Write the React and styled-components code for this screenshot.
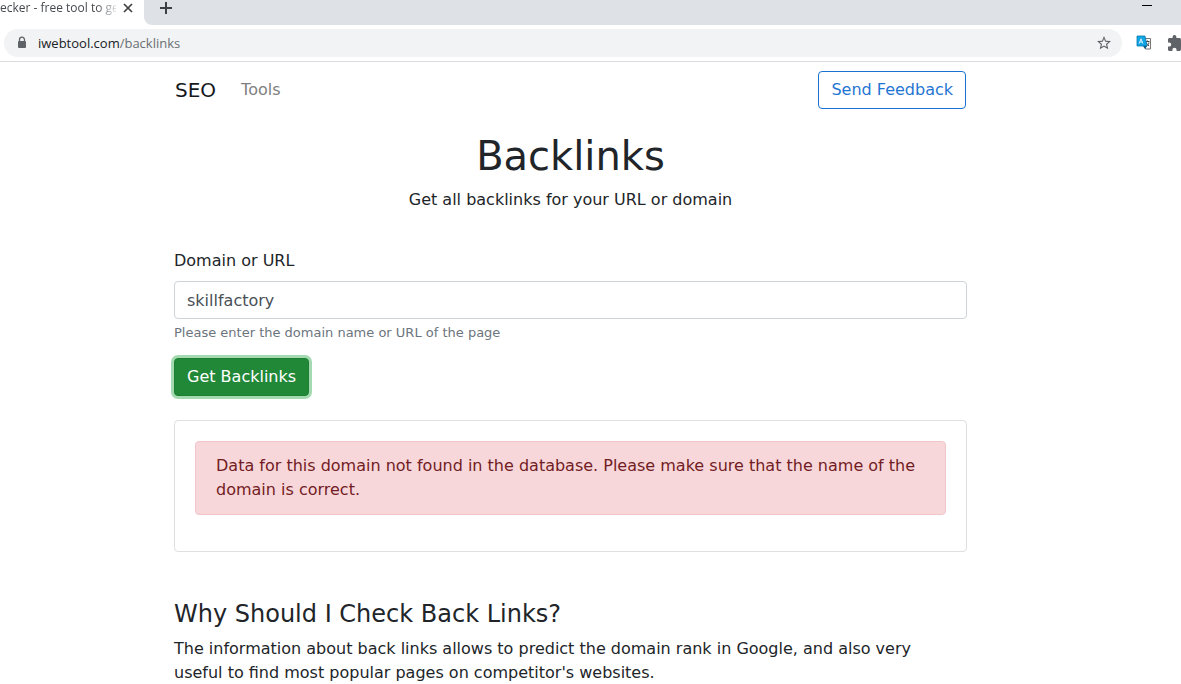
import React from 'react';
import styled, { createGlobalStyle } from 'styled-components';

const GlobalStyle = createGlobalStyle`
  *, *::before, *::after { box-sizing: border-box; }
  html, body { height: 100%; }
  body {
    margin: 0;
    overflow: hidden;
    background: #fff;
    color: #212529;
    font-family: Verdana, "DejaVu Sans", sans-serif;
    font-size: 16px;
    line-height: 24px;
  }
  h1, h2, p { margin: 0; font-weight: 400; }
`;

const Browser = styled.header`
  border-bottom: 1px solid #dadce0;
  font-family: "Segoe UI", "Open Sans", sans-serif;
`;

const TabStrip = styled.div`
  display: flex;
  height: 25px;
  background: #fff;
`;

const Tab = styled.div`
  display: flex;
  flex: none;
  align-items: center;
  gap: 4px;
  width: 144px;
  height: 16px;
  font-size: 12px;
  line-height: 16px;
  color: #45494d;
`;

const TabTitle = styled.span`
  width: 116px;
  overflow: hidden;
  white-space: nowrap;
  mask-image: linear-gradient(to right, #000 96px, transparent 120px);
`;

const TabRest = styled.div`
  display: flex;
  flex: 1;
  justify-content: space-between;
  padding: 0 26px 0 14px;
  background: #dee1e6;
  border-bottom-left-radius: 8px;
`;

const IconButton = styled.button`
  display: flex;
  flex: none;
  align-items: center;
  justify-content: center;
  width: 16px;
  height: 16px;
  padding: 0;
  border: 0;
  background: none;
  color: #3c4043;
`;

const ToolButton = styled(IconButton)`
  color: #5f6368;
`;

const Toolbar = styled.div`
  display: flex;
  align-items: center;
  height: 36px;
  padding-left: 4px;
  overflow: hidden;
`;

const AddressBar = styled.div`
  display: flex;
  flex: 1;
  align-items: center;
  gap: 8px;
  height: 28px;
  padding: 0 10px;
  border-radius: 14px;
  background: #f1f3f4;
  color: #5f6368;
`;

const Address = styled.div`
  flex: 1;
  font-size: 13px;
  line-height: 20px;
  color: #6b6f73;

  span { color: #202124; }
`;

const Extensions = styled.div`
  display: flex;
  flex: none;
  gap: 16px;
  width: 59px;
  padding-left: 14px;
`;

const Page = styled.div`
  padding: 0 214px 0 174px;
`;

const Nav = styled.nav`
  display: flex;
  align-items: center;
  gap: 25px;
  padding: 9px 1px;
`;

const Brand = styled.a`
  font-size: 20px;
  line-height: 30px;
  color: #16191c;
  text-decoration: none;
`;

const NavLink = styled.a`
  flex: 1;
  color: #808080;
  text-decoration: none;
`;

const Button = styled.button`
  height: 38px;
  padding: 0 12px;
  border: 1px solid ${({ $primary }) => ($primary ? '#1e7e34' : '#1a73d2')};
  border-radius: 4px;
  background: ${({ $primary }) => ($primary ? '#218838' : '#fff')};
  box-shadow: ${({ $primary }) => ($primary ? '0 0 0 3px #a3dab0' : 'none')};
  color: ${({ $primary }) => ($primary ? '#fff' : '#1f75d3')};
  font: inherit;
`;

const Intro = styled.div`
  display: flex;
  flex-direction: column;
  gap: 8px;
  padding: 14px 0 37px;
  text-align: center;
`;

const Title = styled.h1`
  font-size: 40px;
  line-height: 48px;
`;

const Form = styled.form`
  display: flex;
  flex-direction: column;
  align-items: flex-start;
`;

const Label = styled.label`
  margin-bottom: 8px;
`;

const TextInput = styled.input`
  width: 100%;
  height: 38px;
  padding: 0 12px;
  border: 1px solid #ced4da;
  border-radius: 4px;
  outline: 0;
  background: #fff;
  color: #495057;
  font: inherit;
`;

const Hint = styled.small`
  margin: 4px 0 15px;
  font-size: 13px;
  line-height: 20px;
  color: #6c757d;
`;

const Card = styled.section`
  margin-top: 24px;
  padding: 20px 20px 36px;
  border: 1px solid #dfdfdf;
  border-radius: 4px;
`;

const Alert = styled.div`
  padding: 12px 20px;
  border: 1px solid #f1c6cb;
  border-radius: 4px;
  background: #f8d7da;
  color: #721c24;
`;

const Article = styled.article`
  display: flex;
  flex-direction: column;
  gap: 8px;
  margin-top: 48px;
  padding-right: 20px;
`;

const SectionTitle = styled.h2`
  font-size: 24px;
  line-height: 29px;
`;

const CloseIcon = () => (
  <svg width="10" height="10" viewBox="0 0 10 10" fill="none" stroke="currentColor" strokeWidth="1.7">
    <path d="M1 1l8 8M9 1L1 9" />
  </svg>
);

const PlusIcon = () => (
  <svg width="14" height="14" viewBox="0 0 14 14" fill="none" stroke="currentColor" strokeWidth="2">
    <path d="M7 1v12M1 7h12" />
  </svg>
);

const MinimizeIcon = () => (
  <svg width="10" height="10" viewBox="0 0 10 10">
    <path d="M0 2h10v1H0z" fill="#000" />
  </svg>
);

const LockIcon = () => (
  <svg width="16" height="16" viewBox="0 0 16 16">
    <path d="M5.500 6V4.700a2.500 2.500 0 0 1 5 0V6" fill="none" stroke="currentColor" strokeWidth="1.3" />
    <rect x="4" y="6" width="8" height="7" rx="1" fill="currentColor" />
  </svg>
);

const StarIcon = () => (
  <svg width="14" height="14" viewBox="2 2 20 20" fill="currentColor">
    <path d="M22 9.240l-7.190-.62L12 2 9.190 8.630 2 9.240l5.460 4.730L5.820 21 12 17.270 18.180 21l-1.630-7.030L22 9.240zM12 15.400l-3.760 2.270 1-4.280-3.320-2.880 4.380-.38L12 6.100l1.710 4.040 4.380.38-3.320 2.880 1 4.280L12 15.400z" />
  </svg>
);

const TranslateIcon = () => (
  <svg width="16" height="16" viewBox="0 0 16 16">
    <path d="M7.500 3.500h7v10.500h-5z" fill="#f7f7f7" stroke="#777" />
    <path d="M10 6.500h3.500M11.500 5.500v1M13 7.500c-.6 2-1.500 3-2.500 3.500M10.300 7.500c.5 1.600 1.300 2.800 2.700 3.300" fill="none" stroke="#444" />
    <path d="M1 1h8l2 10H1z" fill="#12a5e6" stroke="#0878ad" strokeWidth=".8" />
    <path d="M7 11h4l-2 3z" fill="#075b87" />
    <path d="M3.200 8.500L5 3.800 6.800 8.500M3.800 7h2.400" fill="none" stroke="#d8f2fd" />
  </svg>
);

const PuzzleIcon = () => (
  <svg width="16" height="16" viewBox="2 1 21 21" fill="currentColor">
    <path d="M20.500 11H19V7c0-1.100-.9-2-2-2h-4V3.500a2.500 2.500 0 0 0-5 0V5H4c-1.100 0-1.990.9-1.990 2v3.800H3.500c1.490 0 2.700 1.210 2.700 2.700s-1.210 2.700-2.700 2.700H2V20c0 1.100.9 2 2 2h3.800v-1.500c0-1.490 1.210-2.700 2.700-2.700s2.700 1.210 2.700 2.700V22H17c1.100 0 2-.9 2-2v-4h1.500a2.500 2.500 0 0 0 0-5z" />
  </svg>
);

export default function App() {
  return (
    <>
      <GlobalStyle />
      <Browser>
        <TabStrip>
          <Tab>
            <TabTitle>ecker - free tool to get</TabTitle>
            <IconButton aria-label="Close tab"><CloseIcon /></IconButton>
          </Tab>
          <TabRest>
            <IconButton aria-label="New tab"><PlusIcon /></IconButton>
            <IconButton aria-label="Minimize"><MinimizeIcon /></IconButton>
          </TabRest>
        </TabStrip>
        <Toolbar>
          <AddressBar>
            <LockIcon />
            <Address><span>iwebtool.com</span>/backlinks</Address>
            <ToolButton aria-label="Bookmark"><StarIcon /></ToolButton>
          </AddressBar>
          <Extensions>
            <ToolButton aria-label="Translate"><TranslateIcon /></ToolButton>
            <ToolButton aria-label="Extensions"><PuzzleIcon /></ToolButton>
          </Extensions>
        </Toolbar>
      </Browser>
      <Page>
        <Nav>
          <Brand href="#">SEO</Brand>
          <NavLink href="#tools">Tools</NavLink>
          <Button type="button">Send Feedback</Button>
        </Nav>
        <main>
          <Intro>
            <Title>Backlinks</Title>
            <p>Get all backlinks for your URL or domain</p>
          </Intro>
          <Form onSubmit={(event) => event.preventDefault()}>
            <Label htmlFor="domain">Domain or URL</Label>
            <TextInput id="domain" type="text" defaultValue="skillfactory" aria-describedby="domain-hint" />
            <Hint id="domain-hint">Please enter the domain name or URL of the page</Hint>
            <Button type="submit" $primary>Get Backlinks</Button>
          </Form>
          <Card>
            <Alert role="alert">
              Data for this domain not found in the database. Please make sure that the name of the domain is correct.
            </Alert>
          </Card>
          <Article>
            <SectionTitle>Why Should I Check Back Links?</SectionTitle>
            <p>
              The information about back links allows to predict the domain rank in Google, and also very useful to
              find most popular pages on competitor's websites.
            </p>
          </Article>
        </main>
      </Page>
    </>
  );
}
